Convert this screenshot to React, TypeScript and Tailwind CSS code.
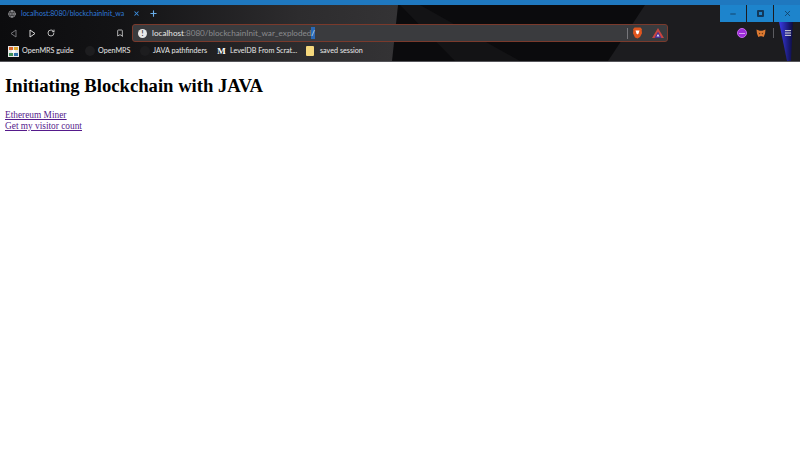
import { Bookmark, Globe, Menu, RotateCw, X, Plus, Minus } from "lucide-react";

const bookmarks = [
	{ label: "OpenMRS guide", width: "w-[77px]", icon: <MrsIcon /> },
	{ label: "OpenMRS", width: "w-[55px]", icon: <DarkDot /> },
	{ label: "JAVA pathfinders", width: "w-[76px]", icon: <DarkDot /> },
	{ label: "LevelDB From Scrat...", width: "w-[90px]", icon: <span className="w-[11px] text-center font-['Liberation_Serif',serif] text-[9px] font-bold text-white">M</span> },
	{ label: "saved session", width: "", icon: <span className="mr-[3px] h-2.5 w-2 rounded-[1px] bg-[#f4d77c]" /> },
];

function MrsIcon() {
	return (
		<svg width="11" height="11" viewBox="0 0 11 11">
			<rect width="11" height="11" fill="#e8e8e8" />
			<rect x="1" y="1" width="4" height="3" fill="#d9662b" />
			<rect x="6" y="1" width="4" height="3" fill="#e0a92e" />
			<rect x="1" y="7" width="4" height="3" fill="#3f8f5b" />
			<rect x="6" y="7" width="4" height="3" fill="#2f6fa8" />
			<circle cx="5.500" cy="5.500" r="1.800" fill="#fff" />
		</svg>
	);
}

function DarkDot() {
	return <span className="h-2.5 w-2.5 rounded-full bg-[#1d1d1f]" />;
}

function Wallpaper() {
	return (
		<svg className="absolute inset-0 h-full w-full" viewBox="0 0 800 57" preserveAspectRatio="none">
			<defs>
				<linearGradient id="gray" x1="0" x2="1" y1="0" y2="0">
					<stop offset="0" stopColor="#0c0c0e" />
					<stop offset="0.3" stopColor="#131315" />
					<stop offset="0.75" stopColor="#2d2c2e" />
					<stop offset="1" stopColor="#343335" />
				</linearGradient>
				<linearGradient id="streak" x1="0" x2="1" y1="0" y2="0">
					<stop offset="0" stopColor="#3a3ae8" />
					<stop offset="1" stopColor="#0c0c40" />
				</linearGradient>
			</defs>
			<rect width="800" height="57" fill="#0b0b0d" />
			<polygon points="0,0 398,0 392,57 0,57" fill="url(#gray)" />
			<polygon points="400,0 420,0 520,57 455,57" fill="#131315" />
			<polygon points="645,0 800,0 800,57 608,57" fill="#1c1c1f" />
			<polygon points="779,17 793,17 791,57 787,57" fill="url(#streak)" />
		</svg>
	);
}

function BackIcon({ className }: { className: string }) {
	return (
		<svg className={className} width="7" height="9" viewBox="0 0 7 9" fill="none" stroke="currentColor" strokeWidth="1">
			<path d="M6 1 1 4.500 6 8Z" strokeLinejoin="round" />
		</svg>
	);
}

function ForwardIcon({ className }: { className: string }) {
	return (
		<svg className={className} width="7" height="9" viewBox="0 0 7 9" fill="none" stroke="currentColor" strokeWidth="1">
			<path d="M1 1 6 4.500 1 8Z" strokeLinejoin="round" />
		</svg>
	);
}

function BraveIcon() {
	return (
		<svg width="11" height="12" viewBox="0 0 11 12">
			<path d="M2.500.5h6l1.500 1.700-.3 1 .3 3-2 3.700-2.500 1.600L3 10.400 1 6.200l.3-3L1 2.200Z" fill="#e0561f" />
			<path d="M3.500 3.500h4L6.500 6.500l-1 1-1-1Z" fill="#fff" />
		</svg>
	);
}

function PrismIcon() {
	return (
		<svg width="12" height="10" viewBox="0 0 12 10">
			<polygon points="6,0 12,10 0,10" fill="#c9453f" />
			<polygon points="6,3.500 9.500,10 2.500,10" fill="#4a2f96" />
			<polygon points="6,6 7.500,8.500 4.500,8.500" fill="#e9e4f4" />
		</svg>
	);
}

function FoxIcon() {
	return (
		<svg width="10" height="9" viewBox="0 0 11 10">
			<polygon points="0.500,0.500 4,2 7,2 10.500,0.500 10,5 8.500,9 6.500,8 4.500,8 2.500,9 1,5" fill="#dd7a32" />
			<polygon points="3,4 5,5 3.500,6" fill="#6b3a17" />
			<polygon points="8,4 6,5 7.500,6" fill="#6b3a17" />
		</svg>
	);
}

export default function App() {
	return (
		<div className="flex min-h-[453px] flex-col bg-white font-['Liberation_Serif',serif]">
			<div className="h-[5px] bg-[#1f78bf]" />
			<header className="relative h-[57px] overflow-hidden border-b border-[#55555a] font-['Lato',sans-serif]">
				<Wallpaper />
				<div className="relative flex h-[17px] items-center">
					<Globe className="ml-2 h-2 w-2 text-[#9a9a9e]" strokeWidth={2.500} />
					<span className="ml-[5px] w-[108px] whitespace-nowrap text-[7px] text-[#2f79d8]">localhost:8080/blockchainInit_wa</span>
					<X className="ml-[4px] h-[7px] w-[7px] text-[#3c8fe0]" strokeWidth={3.500} />
					<Plus className="ml-[9px] h-[9px] w-[9px] text-[#6aaeea]" strokeWidth={3} />
					<div className="ml-auto flex h-[17px] w-[80px] gap-px">
						<div className="flex flex-1 items-center justify-center bg-[#1d84cc]">
							<Minus className="h-2 w-2 text-[#12385a]" strokeWidth={2.500} />
						</div>
						<div className="flex flex-1 items-center justify-center bg-[#1d84cc]">
							<span className="h-[7px] w-[7px] rounded-[1px] border-2 border-[#12385a]" />
						</div>
						<div className="flex flex-1 items-center justify-center bg-[#1d84cc]">
							<X className="h-[9px] w-[9px] text-[#12385a]" strokeWidth={2} />
						</div>
					</div>
				</div>
				<div className="relative flex h-[22px] items-center">
					<BackIcon className="ml-[10px] text-[#77777b]" />
					<ForwardIcon className="ml-[12px] text-[#d8d8d8]" />
					<RotateCw className="ml-[11px] h-2 w-2 text-[#d8d8d8]" strokeWidth={2.500} />
					<Bookmark className="ml-[61px] h-[10px] w-2 text-[#d0d0d0]" strokeWidth={2.500} />
					<div className="ml-[8px] flex h-[18px] w-[536px] items-center rounded-[3px] border border-[#7a3a2c] bg-[#3a3b3e]">
						<span className="ml-[5px] flex h-[9px] w-[9px] items-center justify-center rounded-full bg-[#e8e8e8] text-[7px] font-bold leading-none text-[#333]">!</span>
						<span className="ml-[5px] whitespace-nowrap text-[8.150px] text-[#e6e6e6]">localhost</span>
						<span className="whitespace-nowrap text-[8.150px] text-[#8b8b8e]">:8080/blockchainInit_war_exploded</span>
						<span className="bg-[#2a68b4] text-[8.150px] leading-[12px] text-[#dfe9f5]">/</span>
						<span className="ml-auto mr-[4px] h-[11px] w-px bg-[#77777b]" />
						<span className="mr-[9px] flex"><BraveIcon /></span>
						<span className="mr-[3px] flex"><PrismIcon /></span>
					</div>
					<span className="ml-[69px] flex h-[10px] w-[10px] items-center justify-center rounded-full border border-[#c46ae8] bg-[#9c2bd8]">
						<span className="h-px w-1.5 bg-[#d9a0f0]" />
					</span>
					<span className="ml-[9px] flex"><FoxIcon /></span>
					<span className="ml-[7px] h-[10px] w-px bg-[#5c5c60]" />
					<Menu className="ml-[10px] h-2 w-2 text-[#e0e0e0]" strokeWidth={3} />
				</div>
				<nav className="relative flex h-[14px] items-center pl-2 pt-px text-[7.200px] text-[#e8e8e8]">
					{bookmarks.map(item => (
						<span key={item.label} className={`flex shrink-0 items-center gap-[3px] whitespace-nowrap ${item.width}`}>
							{item.icon}
							{item.label}
						</span>
					))}
				</nav>
			</header>
			<main className="px-[5px] text-black">
				<h1 className="mt-[13px] text-[18.670px] font-bold leading-[22px]">Initiating Blockchain with JAVA</h1>
				<div className="mt-[13px] flex flex-col items-start text-[9.330px] leading-[11px] text-[#551a8b] underline">
					<a href="#miner">Ethereum Miner</a>
					<a href="#count">Get my visitor count</a>
				</div>
			</main>
		</div>
	);
}
